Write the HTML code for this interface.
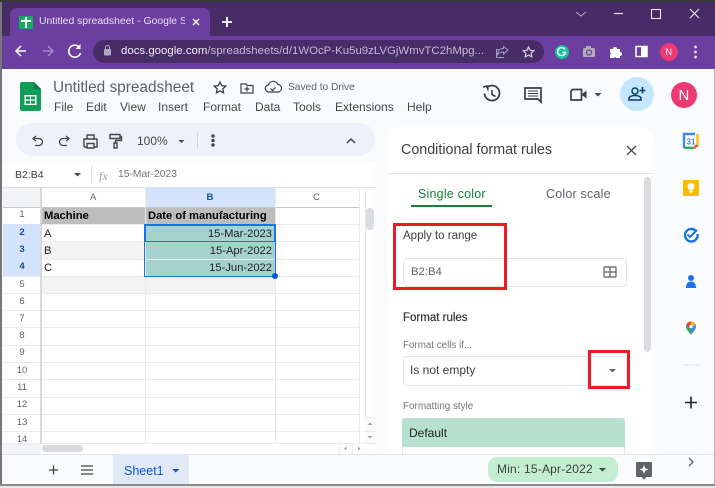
<!DOCTYPE html>
<html><head><meta charset="utf-8"><style>
html,body{margin:0;padding:0}
body{width:715px;height:488px;overflow:hidden;position:relative;background:#f9fbfd;font-family:"Liberation Sans",sans-serif;color:#3c4043}
.a{position:absolute;white-space:nowrap;line-height:1}
svg{position:absolute;overflow:visible}
.h{position:absolute;background:#e8eaec;height:1px;left:3px;width:356px}
.v{position:absolute;background:#e8eaec;width:1px;top:207px;height:236px}
.n{position:absolute;left:3px;width:38px;text-align:center;font-size:9.5px;color:#5f6368;line-height:1}
.m{top:101px;font-size:12px;color:#444746}
.c{font-size:11.2px;color:#222}
</style></head><body>
<!-- chrome -->
<div class="a" style="left:0;top:0;width:715px;height:2px;background:#3a3a3a"></div>
<div class="a" style="left:0;top:2px;width:715px;height:34px;background:#472c68"></div>
<div class="a" style="left:0;top:2px;width:2px;height:484px;background:#77757a"></div>
<div class="a" style="left:10px;top:8px;width:200px;height:28px;background:#6a3fa0;border-radius:7px 7px 0 0"></div>
<div class="a" style="left:2px;top:36px;width:713px;height:33px;background:#6a3fa0"></div>
<div class="a" style="left:19px;top:16px;width:14px;height:13px;background:#1fa463;border-radius:1px"></div>
<div class="a" style="left:25px;top:17px;width:2px;height:11px;background:#fff"></div>
<div class="a" style="left:21px;top:20px;width:10px;height:2px;background:#fff"></div>
<div class="a" style="left:39px;top:17px;font-size:10.400px;color:#e8def5;width:146px;overflow:hidden">Untitled spreadsheet - Google Sheets</div>
<svg style="left:0;top:0" width="715" height="70" fill="none">
<path d="M193 19l6 6M199 19l-6 6" stroke="#fff" stroke-width="1.500"/>
<path d="M222 22h10M227 17v10" stroke="#fff" stroke-width="1.800"/>
<path d="M26 51H16M21 46l-5 5 5 5" stroke="#fff" stroke-width="1.500"/>
<path d="M43 51h10M48 46l5 5-5 5" stroke="#a58ac8" stroke-width="1.500"/>
<path d="M79.500 47.500A6 6 0 1 0 80.500 53" stroke="#fff" stroke-width="1.600"/><path d="M80.500 44v5h-5z" fill="#fff"/>
<path d="M576 12l5 4 5-4" stroke="#b8aec8" stroke-width="1"/>
<path d="M614 13.500h9" stroke="#e8e2ef" stroke-width="1.200"/>
<rect x="651.500" y="9.500" width="9" height="9" stroke="#e8e2ef" stroke-width="1.100"/>
<path d="M690 9l9 9M699 9l-9 9" stroke="#e8e2ef" stroke-width="1.100"/>
</svg>
<div class="a" style="left:93px;top:40px;width:451px;height:23px;background:#472c68;border-radius:12px"></div>
<svg style="left:0;top:0" width="715" height="70" fill="none">
<rect x="104" y="49" width="7" height="6.500" rx="1" fill="#b3a7c2"/><path d="M105.500 49v-1.500a2 2 0 0 1 4 0V49" stroke="#b3a7c2"/>
<path d="M508 50l-4.500-3.500v2c-4 0-6 2.500-6 6 1.500-2 3.500-2.500 6-2.500v2z M504 57.500h-7.500v-8h2" stroke="#a99bbc" stroke-width="1"/>
<path d="M528.500 47l1.600 3.300 3.700.5-2.700 2.500.7 3.600-3.300-1.800-3.300 1.800.7-3.600-2.700-2.500 3.700-.5z" stroke="#d7cfe2" stroke-width="1.200"/>
<circle cx="562" cy="52" r="7" fill="#15c39a"/><path d="M565 49.500a4 4 0 1 0 .5 3h-3" stroke="#fff" stroke-width="1.400"/>
<rect x="583" y="48" width="12" height="9" rx="1.500" fill="#b3abb8"/><rect x="586" y="46" width="5" height="3" fill="#b3abb8"/><circle cx="589" cy="52.500" r="2.500" stroke="#6a3fa0" stroke-width="1.200"/>
<path d="M610 49h3a2 2 0 0 1 4 0h3v3a2 2 0 0 1 0 4v2h-3.500a2 2 0 0 0-3 0H610v-3a2 2 0 0 0 0-3z" fill="#fff"/>
<rect x="636" y="46.500" width="11" height="10" stroke="#fff" stroke-width="1.500"/><rect x="641" y="46.500" width="6" height="10" fill="#fff"/>
<circle cx="669" cy="52" r="9" fill="#ec3b73"/>
<circle cx="695.500" cy="47" r="1.400" fill="#e8e2ef"/><circle cx="695.500" cy="52" r="1.400" fill="#e8e2ef"/><circle cx="695.500" cy="57" r="1.400" fill="#e8e2ef"/>
</svg>
<div class="a" style="left:121px;top:46px;font-size:11.4px;letter-spacing:.02px;color:#f2edf8">docs.google.com<span style="color:#c5b8d6">/spreadsheets/d/1WOcP-Ku5u9zLVGjWmvTC2hMpg...</span></div>
<div class="a" style="left:665.500px;top:48px;font-size:9px;color:#fff">N</div>

<!-- docs header -->
<svg style="left:20px;top:82px" width="22" height="30"><path d="M2 0h12l7 7v20a2 2 0 0 1-2 2H2a2 2 0 0 1-2-2V2a2 2 0 0 1 2-2z" fill="#0f9d58"/><path d="M14 0l7 7h-7z" fill="#0b7a44"/><path d="M4.500 13h12v10h-12z" fill="#fff"/><path d="M6 14.500h4v3H6zM11 14.500h4v3h-4zM6 18.800h4v3H6zM11 18.800h4v3h-4z" fill="#0f9d58"/></svg>
<div class="a" style="left:53px;top:80px;font-size:15.400px;color:#5f6368">Untitled spreadsheet</div>
<div class="a m" style="left:54px">File</div><div class="a m" style="left:86px">Edit</div><div class="a m" style="left:120px">View</div><div class="a m" style="left:158px">Insert</div><div class="a m" style="left:203px">Format</div><div class="a m" style="left:255px">Data</div><div class="a m" style="left:293px">Tools</div><div class="a m" style="left:335px">Extensions</div><div class="a m" style="left:407px">Help</div>
<div class="a" style="left:288px;top:83px;font-size:10.200px;color:#5f6368">Saved to Drive</div>
<svg style="left:0;top:0" width="715" height="130" fill="none" stroke="#3c4043">
<path d="M220 82l1.700 3.700 4.100.4-3 2.800.8 4-3.600-2-3.600 2 .8-4-3-2.800 4.100-.4z" stroke-width="1.300"/>
<path d="M241 84h5l1.500 1.500h5.500v7.500h-12z M247 86.500v5M244.500 89h5" stroke-width="1.200"/>
<path d="M270 92h-1a3.500 3.500 0 0 1-.5-7 5 5 0 0 1 9.500-.5 3.800 3.800 0 0 1 .5 7.500z M270.500 88.500l2 2 3-3" stroke-width="1.200"/>
<path d="M486.500 88a7.500 7.500 0 1 1-2 5.500" stroke-width="1.800"/><path d="M483 87l4.500-1 .5 4.500" stroke-width="1.600"/><path d="M492 90v4.500l3.500 2" stroke-width="1.600"/>
<path d="M525 88h16v14l-3-3h-13z" stroke-width="1.700"/><path d="M528 91h10M528 93.500h10M528 96h10" stroke-width="1.100"/>
<path d="M572.500 89.500H581.500v10.500H571v-9z" stroke-width="1.700"/><path d="M582 94l4.500-3.500v8l-4.500-3.500z" fill="#3c4043" stroke="none"/>
<path d="M594.500 93h7l-3.500 3.500z" fill="#444746" stroke="none"/>
<circle cx="637" cy="94" r="17" fill="#c2e7ff" stroke="none"/>
<circle cx="635" cy="91" r="3" stroke="#0b3a62" stroke-width="1.500"/><path d="M629 100v-1.500c0-2 3-3 6-3s6 1 6 3v1.500z" stroke="#0b3a62" stroke-width="1.500"/><path d="M642.500 87v6.500M639.500 90.500h6" stroke="#0b3a62" stroke-width="1.500"/>
<circle cx="684" cy="95" r="13" fill="#ec3b73" stroke="none"/>
</svg>
<div class="a" style="left:678.500px;top:87.500px;font-size:15px;color:#fff">N</div>

<!-- toolbar -->
<div class="a" style="left:16px;top:123px;width:359px;height:33px;background:#edf2fa;border-radius:17px"></div>
<svg style="left:0;top:0;" width="400" height="170" fill="none" stroke="#444746" stroke-width="1.300">
<path d="M36 136l-3 2.500 3 2.500M33 138.500h6a3.500 3.500 0 0 1 0 7h-4"/>
<path d="M66 136l3 2.500-3 2.500M69 138.500h-6a3.500 3.500 0 0 0 0 7h4"/>
<path d="M87 139v-4h7v4M84 147v-8h13v8h-2.500M84 147h2.500M87 143.500h7v4.500h-7z" stroke-width="1.400"/>
<path d="M110 134.500h10v4h-10zM120 136.500h1.500v4H115.500v2.500M114 143h3v5h-3z" stroke-width="1.400"/>
<path d="M178.500 140h6l-3 3z" fill="#444746" stroke="none"/>
<circle cx="213" cy="136" r="1.100" fill="#444746"/><circle cx="213" cy="140.500" r="1.100" fill="#444746"/><circle cx="213" cy="145" r="1.100" fill="#444746"/>
<path d="M347 143l4-4 4 4" stroke-width="1.500"/>
</svg>
<div class="a" style="left:197px;top:132px;width:1px;height:17px;background:#d5d9df"></div>
<div class="a" style="left:137px;top:135px;font-size:12px;color:#444746">100%</div>

<!-- formula bar -->
<div class="a" style="left:3px;top:162px;width:372px;height:25px;background:#fff"></div>
<div class="a" style="left:15px;top:170px;font-size:10.500px;color:#3c4043">B2:B4</div>
<svg style="left:0;top:0" width="120" height="190"><path d="M74 173h7l-3.500 3.500z" fill="#444746"/></svg>
<div class="a" style="left:90.500px;top:166px;width:1px;height:17px;background:#dadce0"></div>
<div class="a" style="left:99px;top:170px;font-size:12px;font-family:'Liberation Serif',serif;font-style:italic;color:#9aa0a6">fx</div>
<div class="a" style="left:118px;top:170px;font-size:10.300px;color:#70757a">15-Mar-2023</div>

<!-- grid -->
<div class="a" style="left:3px;top:187px;width:372px;height:267px;background:#fff"></div>
<div class="a" style="left:3px;top:187px;width:38px;height:20px;background:#f1f3f4"></div>
<div class="a" style="left:145px;top:187px;width:130px;height:20px;background:#d3e3fd"></div>
<div class="a" style="left:41px;top:207px;width:234px;height:17px;background:#bdbdbd"></div>
<div class="a" style="left:41px;top:242px;width:104px;height:17px;background:#f3f3f3"></div>
<div class="a" style="left:41px;top:276px;width:234px;height:17px;background:#f3f3f3"></div>
<div class="a" style="left:145px;top:224px;width:130px;height:52px;background:#a5d3cc"></div>
<div class="h" style="top:224px"></div><div class="h" style="top:241px"></div><div class="h" style="top:259px"></div><div class="h" style="top:276px"></div><div class="h" style="top:293px"></div><div class="h" style="top:310px"></div><div class="h" style="top:327px"></div><div class="h" style="top:345px"></div><div class="h" style="top:362px"></div><div class="h" style="top:379px"></div><div class="h" style="top:397px"></div><div class="h" style="top:414px"></div><div class="h" style="top:431px"></div>
<div class="a" style="left:3px;top:224px;width:38px;height:52px;background:#d3e3fd"></div>
<div class="a" style="left:3px;top:186.500px;width:372px;height:1px;background:#dadce0"></div>
<div class="a" style="left:3px;top:206.500px;width:356px;height:1.500px;background:#c7c7c7"></div>
<div class="a" style="left:39.500px;top:187px;width:2px;height:256px;background:#d7d9dc"></div>
<div class="v" style="left:145px"></div><div class="v" style="left:275px"></div><div class="v" style="left:359px"></div>
<div class="v" style="left:145px;top:187px;height:20px"></div><div class="v" style="left:275px;top:187px;height:20px"></div><div class="v" style="left:359px;top:187px;height:20px"></div>
<div class="a" style="left:365px;top:187px;width:1px;height:267px;background:#e5e7ea"></div>
<div class="a" style="left:366px;top:208px;width:8px;height:22px;background:#dadce0;border-radius:4px"></div>
<div class="a" style="left:90px;top:192.500px;font-size:9.500px;color:#5f6368">A</div>
<div class="a" style="left:206.500px;top:192.500px;font-size:9.500px;color:#174ea6;font-weight:bold">B</div>
<div class="a" style="left:313px;top:192.500px;font-size:9.500px;color:#5f6368">C</div>
<div class="n" style="top:210px">1</div><div class="n" style="top:228px;font-weight:bold;color:#1a4a9c">2</div><div class="n" style="top:245px;font-weight:bold;color:#1a4a9c">3</div><div class="n" style="top:262px;font-weight:bold;color:#1a4a9c">4</div><div class="n" style="top:280px">5</div><div class="n" style="top:297px">6</div><div class="n" style="top:314px">7</div><div class="n" style="top:331px">8</div><div class="n" style="top:348px">9</div><div class="n" style="top:366px">10</div><div class="n" style="top:383px">11</div><div class="n" style="top:400px">12</div><div class="n" style="top:418px">13</div><div class="n" style="top:435px">14</div>
<div class="a c" style="left:44px;top:211px;font-weight:bold;color:#000">Machine</div>
<div class="a c" style="left:148px;top:211px;font-weight:bold;color:#000">Date of manufacturing</div>
<div class="a c" style="left:44px;top:229px">A</div><div class="a c" style="left:44px;top:246px">B</div><div class="a c" style="left:44px;top:263px">C</div>
<div class="a c" style="right:443px;top:228.500px">15-Mar-2023</div><div class="a c" style="right:443px;top:245.500px">15-Apr-2022</div><div class="a c" style="right:443px;top:262.500px">15-Jun-2022</div>
<div class="a" style="left:144px;top:224px;width:130px;height:51px;border:1px solid #1a73e8"></div>
<div class="a" style="left:144.500px;top:224.500px;width:128px;height:15.500px;border:1px solid #1a73e8"></div>
<div class="a" style="left:272px;top:273px;width:6px;height:6px;border-radius:50%;background:#0b57d0"></div>
<!-- scrollbars -->
<div class="a" style="left:3px;top:443px;width:372px;height:11px;background:#fff;border-top:1px solid #e8eaed;box-sizing:border-box"></div>
<div class="a" style="left:3px;top:444px;width:38px;height:10px;background:#f1f3f4"></div>
<div class="a" style="left:42px;top:445px;width:41px;height:7px;background:#d6d8da;border-radius:4px"></div>
<div class="a" style="left:339px;top:444px;width:1px;height:10px;background:#e8eaed"></div>
<div class="a" style="left:352px;top:444px;width:1px;height:10px;background:#e8eaed"></div>
<div class="a" style="left:365px;top:417px;width:10px;height:26px;background:#fafafa;border-top:1px solid #e8eaed;box-sizing:border-box"></div>
<svg style="left:0;top:0" width="400" height="460"><path d="M344 448.500l2.500-2v4zM358 446.500l2.500 2-2.500 2zM367.500 425l2.500-2.500 2.500 2.500zM367.500 436l2.500 2.500 2.500-2.500z" fill="#9aa0a6"/></svg>
<div class="a" style="left:365px;top:431px;width:10px;height:1px;background:#e8eaed"></div>

<!-- bottom bar -->
<div class="a" style="left:2px;top:454px;width:713px;height:30px;background:#f9fbfd;border-top:1px solid #e1e3e6;box-sizing:border-box"></div>
<svg style="left:0;top:0" width="120" height="488" fill="none" stroke="#444746"><path d="M49 470h9M53.500 465.500v9" stroke-width="1.300"/><path d="M81 466h12M81 470h12M81 474h12" stroke-width="1.300"/></svg>
<div class="a" style="left:113px;top:454px;width:76px;height:30px;background:#e1e9f7"></div>
<div class="a" style="left:124px;top:465px;font-size:12.500px;color:#0b57d0">Sheet1</div>
<svg style="left:0;top:0" width="200" height="488"><path d="M172 469h7.500l-3.750 3.500z" fill="#0b57d0"/></svg>

<!-- side panel -->
<div class="a" style="left:388px;top:127px;width:266px;height:327px;background:#fff;border-radius:14px 14px 0 0"></div>
<div class="a" style="left:401px;top:143px;font-size:14.300px;color:#3c4043">Conditional format rules</div>
<svg style="left:0;top:0" width="650" height="165" fill="none"><path d="M627 146l9 9M636 146l-9 9" stroke="#444746" stroke-width="1.300"/></svg>
<div class="a" style="left:388px;top:173px;width:266px;height:1px;background:#e3e5e8"></div>
<div class="a" style="left:418px;top:187.500px;font-size:12.500px;color:#188038;letter-spacing:.2px">Single color</div>
<div class="a" style="left:411px;top:205px;width:81px;height:2px;background:#188038"></div>
<div class="a" style="left:546px;top:187.500px;font-size:12.500px;color:#5f6368;letter-spacing:.2px">Color scale</div>
<div class="a" style="left:644px;top:177px;width:7px;height:175px;background:#dadce0;border-radius:4px"></div>
<div class="a" style="left:403px;top:231px;font-size:11.500px;color:#3c4043">Apply to range</div>
<div class="a" style="left:403px;top:258px;width:224px;height:29px;border:1px solid #e3e5e8;border-radius:4px;box-sizing:border-box"></div>
<div class="a" style="left:411px;top:267px;font-size:11.300px;color:#5f6368">B2:B4</div>
<svg style="left:0;top:0" width="640" height="290" fill="none"><rect x="604" y="267" width="12" height="10" rx="1" stroke="#70757a" stroke-width="1.400"/><path d="M604 272h12M610 267v10" stroke="#70757a" stroke-width="1.400"/></svg>
<div class="a" style="left:403px;top:313px;font-size:11.500px;color:#333;-webkit-text-stroke:.2px #333">Format rules</div>
<div class="a" style="left:403px;top:341px;font-size:9.800px;color:#70757a">Format cells if...</div>
<div class="a" style="left:403px;top:356px;width:224px;height:30px;border:1px solid #e3e5e8;border-radius:4px;box-sizing:border-box"></div>
<div class="a" style="left:410px;top:364px;font-size:12px;color:#3c4043">Is not empty</div>
<svg style="left:0;top:0" width="640" height="380"><path d="M609 369h7l-3.500 3.500z" fill="#5f6368"/></svg>
<div class="a" style="left:403px;top:402px;font-size:9.900px;color:#70757a">Formatting style</div>
<div class="a" style="left:402px;top:418px;width:223px;height:36px;background:#fff;border:1px solid #e3e5e8;border-bottom:0;border-radius:3px 3px 0 0;box-sizing:border-box"></div>
<div class="a" style="left:402px;top:418px;width:223px;height:29px;background:#b7e1cd;border-radius:3px 3px 0 0"></div>
<div class="a" style="left:409px;top:427px;font-size:12px;color:#202124">Default</div>
<!-- red boxes -->
<div class="a" style="left:393px;top:223px;width:114px;height:67px;border:3px solid #ed1c24;box-sizing:border-box"></div>
<div class="a" style="left:588px;top:350px;width:42px;height:39px;border:3px solid #ed1c24;box-sizing:border-box"></div>
<!-- min pill -->
<div class="a" style="left:488px;top:457px;width:130px;height:25px;background:#c4eed0;border-radius:9px"></div>
<div class="a" style="left:497px;top:463px;font-size:12px;color:#3c4043;letter-spacing:.2px">Min: 15-Apr-2022</div>
<svg style="left:0;top:0" width="715" height="488" fill="none"><path d="M599 468h7l-3.500 3.500z" fill="#3c4043"/>
<path d="M637 462h14a1 1 0 0 1 1 1v13a1 1 0 0 1-1 1h-4.500l-2.500 2.500-2.500-2.500H637a1 1 0 0 1-1-1v-13a1 1 0 0 1 1-1z" fill="#5f6368"/><path d="M644 465l1.200 3.300 3.300 1.200-3.300 1.200-1.200 3.300-1.200-3.300-3.300-1.200 3.300-1.200z" fill="#fff"/>
<path d="M689 458l4 4-4 4" stroke="#5f6368" stroke-width="1.300"/>
<path d="M691 396.500v12M685 402.500h12" stroke="#202124" stroke-width="1.600"/>
</svg>
<!-- right rail -->
<svg style="left:0;top:0" width="715" height="488" fill="none">
<rect x="684" y="134" width="14" height="14" rx="1" fill="#fff"/>
<path d="M695 134H684V148" stroke="#4285f4" stroke-width="2.400"/><path d="M697.500 134v11" stroke="#fbbc04" stroke-width="2.400"/><path d="M684 147.800H694" stroke="#34a853" stroke-width="2.400"/><path d="M694.500 149.500l4.500-4.500h-4.500z" fill="#ea4335"/>
<text x="691" y="144.500" font-family="Liberation Sans" font-size="8" font-weight="bold" fill="#4285f4" text-anchor="middle">31</text>
<rect x="683" y="180" width="16" height="16" rx="1.500" fill="#fbbc04"/><circle cx="691" cy="186.500" r="3.500" fill="#fff"/><rect x="689.500" y="190.500" width="3" height="2" fill="#fff"/>
<path d="M695.500 230.500a6.300 6.300 0 1 0 2 3.500" stroke="#1a73e8" stroke-width="2.400"/><path d="M687.500 234.500l2.500 2.500 7-7" stroke="#1a73e8" stroke-width="2"/>
<circle cx="691" cy="278" r="3" fill="#1a73e8"/><path d="M686 288c0-4.500 2-6.500 5-6.500s5 2 5 6.500z" fill="#1a73e8"/>
<path d="M691 321.500a5 5 0 0 1 5 5c0 3.500-3.500 5.500-5 8.500z" fill="#4285f4"/><path d="M691 321.500a5 5 0 0 0-5 5c0 3.500 3.500 5.500 5 8.500z" fill="#34a853"/><path d="M686.500 324.500a5 5 0 0 1 4.500-3l2.500 1-5 5z" fill="#ea4335"/><path d="M691 321.500a5 5 0 0 1 4.500 2.500l-4 3z" fill="#fbbc04"/><circle cx="691" cy="326.500" r="1.700" fill="#fff"/>
<path d="M683 365h17" stroke="#e1e3e6"/>
</svg>
<div class="a" style="left:713.500px;top:69px;width:1.500px;height:415px;background:#b5b5b8"></div>
<!-- bottom -->
<div class="a" style="left:0;top:484px;width:715px;height:1.500px;background:#8a8a8a"></div>
<div class="a" style="left:0;top:485.500px;width:715px;height:2.500px;background:#e8e8e8"></div>
</body></html>
